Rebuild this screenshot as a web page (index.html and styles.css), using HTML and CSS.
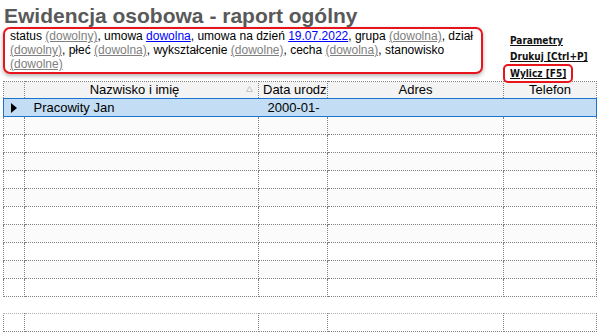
FILE: index.html
```html
<!DOCTYPE html>
<html lang="pl">
<head>
    <meta charset="UTF-8">
    <meta name="viewport" content="width=device-width, initial-scale=1.0">
    <title>Ewidencja osobowa - raport ogólny</title>
    <link rel="stylesheet" href="styles.css">
</head>
<body>
    <div class="naglowek">
        <div class="lewa">
            <h1 class="tytul">Ewidencja osobowa - raport ogólny</h1>
            <div class="filtry">status <a class="dowolny">(dowolny)</a>, umowa <a class="wartosc">dowolna</a>, umowa na dzień <a class="wartosc">19.07.2022</a>, grupa <a class="dowolny">(dowolna)</a>, dział <a class="dowolny">(dowolny)</a>, płeć <a class="dowolny">(dowolna)</a>, wykształcenie <a class="dowolny">(dowolne)</a>, cecha <a class="dowolny">(dowolna)</a>, stanowisko <a class="dowolny">(dowolne)</a></div>
        </div>
        <div class="akcje">
            <a class="akcja">Parametry</a>
            <a class="akcja">Drukuj [Ctrl+P]</a>
            <a class="akcja wylicz">Wylicz [F5]</a>
        </div>
    </div>

    <table class="siatka">
        <colgroup>
            <col class="k-wsk">
            <col class="k-nazwisko">
            <col class="k-data">
            <col class="k-adres">
            <col class="k-telefon">
        </colgroup>
        <tr class="tytuly">
            <td></td>
            <td class="nazwisko">Nazwisko i imię<span class="sort"><svg width="7" height="6" viewBox="0 0 7 6"><path d="M3.5 0.5 L6.5 5.5 L0.5 5.5 Z" fill="none" stroke="#c4c4c4" stroke-width="1"/></svg></span></td>
            <td class="lewo">Data urodz</td>
            <td>Adres</td>
            <td>Telefon</td>
        </tr>
        <tr class="wybrany">
            <td class="wsk"><svg width="6" height="10" viewBox="0 0 6 10"><path d="M0 0 L6 5 L0 10 Z" fill="#000"/></svg></td>
            <td>Pracowity Jan</td>
            <td>2000-01-</td>
            <td></td>
            <td></td>
        </tr>
        <tr class="szary"><td></td><td></td><td></td><td></td><td></td></tr>
        <tr><td></td><td></td><td></td><td></td><td></td></tr>
        <tr class="szary"><td></td><td></td><td></td><td></td><td></td></tr>
        <tr><td></td><td></td><td></td><td></td><td></td></tr>
        <tr class="szary"><td></td><td></td><td></td><td></td><td></td></tr>
        <tr><td></td><td></td><td></td><td></td><td></td></tr>
        <tr class="szary"><td></td><td></td><td></td><td></td><td></td></tr>
        <tr><td></td><td></td><td></td><td></td><td></td></tr>
        <tr class="szary"><td></td><td></td><td></td><td></td><td></td></tr>
        <tr><td></td><td></td><td></td><td></td><td></td></tr>
    </table>

    <table class="siatka stopka">
        <colgroup>
            <col class="k-wsk">
            <col class="k-nazwisko">
            <col class="k-data">
            <col class="k-adres">
            <col class="k-telefon">
        </colgroup>
        <tr><td></td><td></td><td></td><td></td><td></td></tr>
    </table>
</body>
</html>
```

FILE: styles.css
```css
/* Ogólne */
body {
    margin: 0;
    background: #fff;
    font-family: "Liberation Sans", Arial, sans-serif;
    color: #000;
}

/* Nagłówek raportu */
.naglowek {
    display: flex;
    height: 81px;
}
.lewa {
    padding-left: 3px;
}
.tytul {
    margin: 0;
    padding: 5px 0 0 1px;
    font-size: 21px;
    line-height: 22px;
    font-weight: bold;
    color: #595959;
}
.filtry {
    width: 480px;
    box-sizing: border-box;
    border: 2px solid #e8141c;
    border-radius: 7px;
    padding: 0 4px 1px 5px;
    font-size: 12px;
    line-height: 14px;
    box-shadow: 0 2px 4px rgba(0, 0, 0, 0.3);
}
.filtry a {
    text-decoration: underline;
}
.dowolny {
    color: #808080;
}
.wartosc {
    color: #0000ff;
}

/* Linki akcji */
.akcje {
    display: flex;
    flex-direction: column;
    align-items: flex-start;
    margin-left: 20px;
    padding-top: 33px;
    position: relative;
    z-index: 1;
}
.akcja {
    display: block;
    padding-left: 7px;
    font-family: "DejaVu Sans Condensed", "DejaVu Sans", sans-serif;
    font-stretch: condensed;
    font-size: 10px;
    font-weight: bold;
    line-height: 16px;
    color: #111;
    text-decoration: underline;
}
.wylicz {
    margin-top: -1px;
    padding: 0 5px;
    line-height: 15px;
    border: 2px solid #e8141c;
    border-radius: 5px;
}

/* Siatka danych */
.siatka {
    margin-left: 3px;
    width: 594px;
    border-collapse: collapse;
    table-layout: fixed;
    font-size: 13px;
}
.k-wsk { width: 21px; }
.k-nazwisko { width: 234px; }
.k-data { width: 69px; }
.k-adres { width: 176px; }
.k-telefon { width: 93px; }

.siatka td {
    height: 17px;
    padding: 0 0 0 9px;
    border: 1px dotted #808080;
    white-space: nowrap;
    overflow: hidden;
    line-height: 16px;
}
.tytuly td {
    height: 16px;
    padding: 0;
    background: #f3f3f3;
    text-align: center;
}
.tytuly .nazwisko {
    position: relative;
    padding-right: 14px;
}
.tytuly .lewo {
    text-align: left;
    padding-left: 4px;
}
.sort {
    position: absolute;
    right: 5px;
    top: 4px;
    line-height: 0;
}
.wybrany td {
    background: #c2ddf4;
    border-top: 1px solid #1874d0;
    border-bottom: 1px solid #1874d0;
    border-left-style: hidden;
    border-right-style: hidden;
}
.wybrany td:first-child {
    border-left: 1px solid #1874d0;
}
.wybrany td:last-child {
    border-right: 1px solid #1874d0;
}
.wybrany .wsk {
    padding: 0;
    text-align: center;
    line-height: 0;
}
.szary td {
    background: #fbfbfb;
}

.stopka {
    margin-top: 16px;
}
.stopka td {
    border-top-color: #b0b0b0;
}
```
